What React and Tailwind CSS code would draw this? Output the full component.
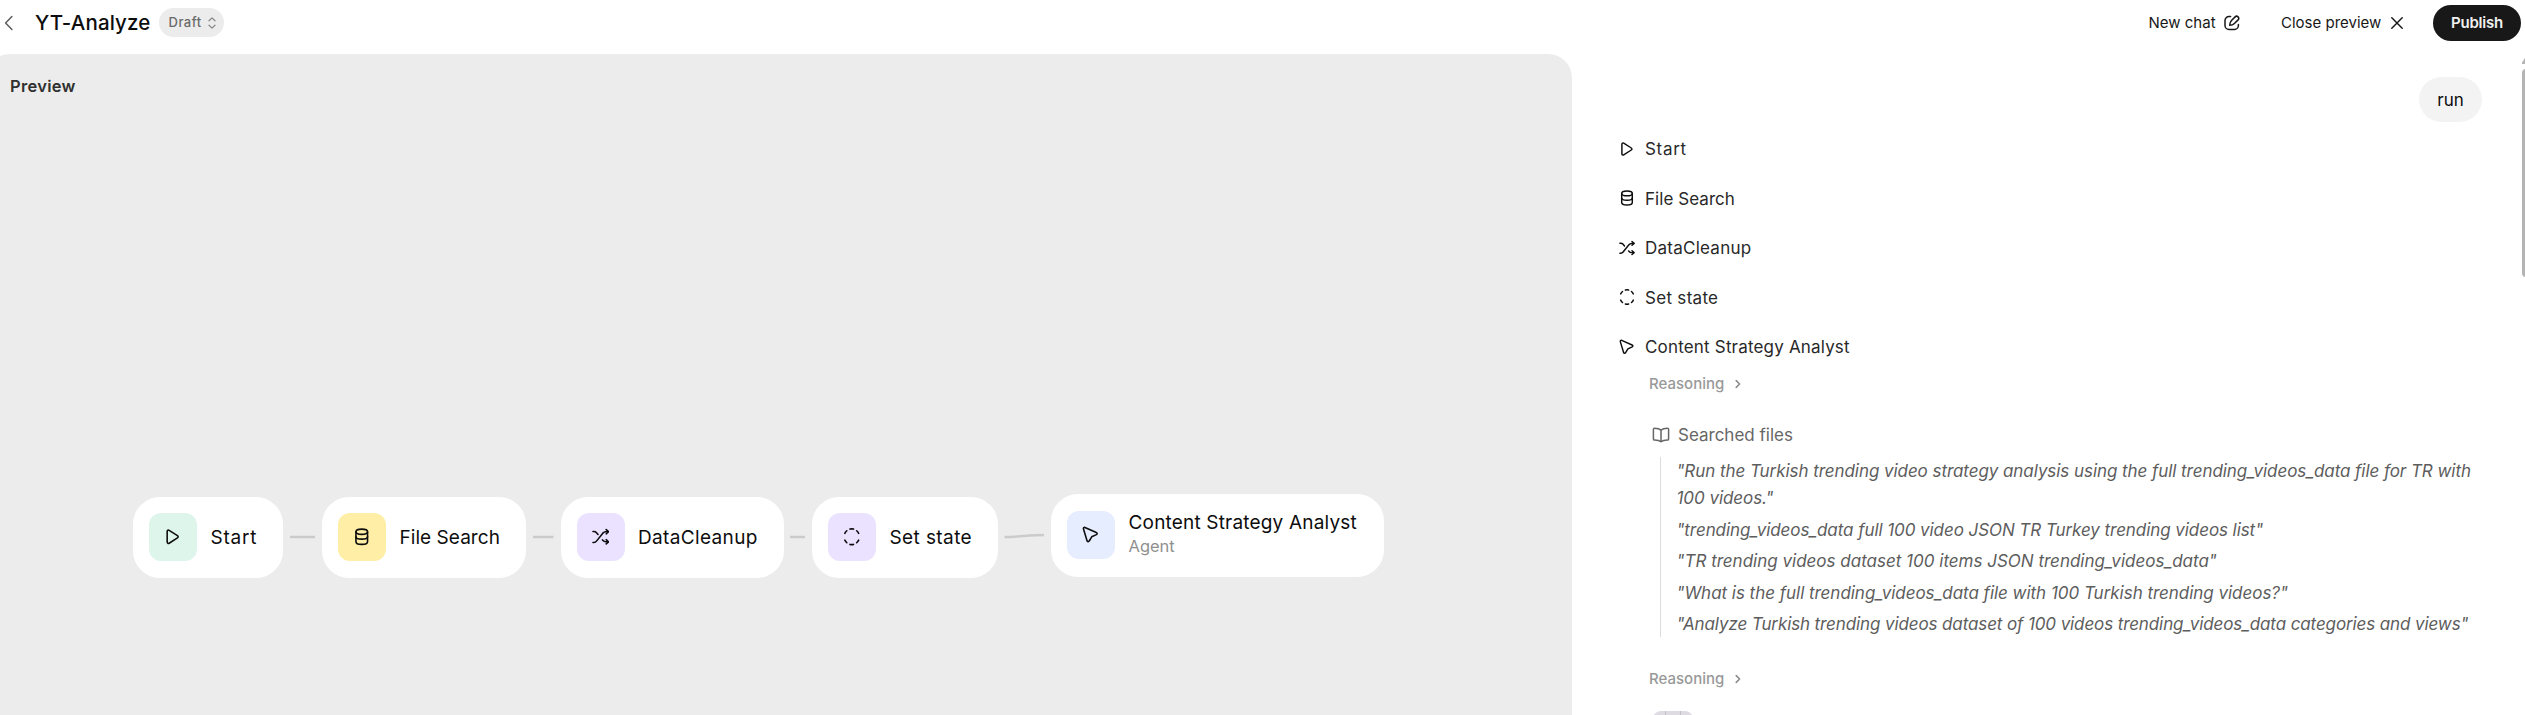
import React from "react";

const stroke = {
  fill: "none",
  stroke: "currentColor",
  strokeWidth: 1.45,
  strokeLinecap: "round",
  strokeLinejoin: "round",
};

const shapes = {
  play: (
    <path d="M2.9 3.1v9.8c0 1 1 1.5 1.8 1l7.6-4.9c.8-.5.8-1.5 0-2L4.7 2.1c-.8-.5-1.8 0-1.8 1z" />
  ),
  database: (
    <>
      <ellipse cx="8" cy="3.4" rx="5.3" ry="2.4" />
      <path d="M2.7 3.4v9.1c0 1.4 2.4 2.5 5.3 2.5s5.3-1.1 5.3-2.5V3.4" />
      <path d="M2.7 7.9c0 1.3 2.4 2.3 5.3 2.3s5.3-1 5.3-2.3" />
    </>
  ),
  shuffle: (
    <>
      <path d="M.9 13.2h.8c1 0 1.8-.4 2.4-1.2l5.8-7.3c.7-.8 1.5-1.3 2.6-1.3h2.2" />
      <path d="M.9 3.2h.8c1 0 1.8.4 2.4 1.1l1.4 1.6" />
      <path d="M9.6 10.9l.5.6c.6.7 1.4 1.1 2.4 1.1h2.2" />
      <path d="M13 1.5l2.1 1.9L13 5.3M13 10.7l2.1 1.9-2.1 1.9" />
    </>
  ),
  state: (
    <path d="M6.4 1A7.2 7.2 0 0 1 9.6 1M12.5 2.5A7.2 7.2 0 0 1 14.3 4.9M14.3 11.1A7.2 7.2 0 0 1 12.5 13.5M9.6 15A7.2 7.2 0 0 1 6.4 15M3.5 13.5A7.2 7.2 0 0 1 1.7 11.1M1.7 4.9A7.2 7.2 0 0 1 3.5 2.5" />
  ),
  agent: (
    <path d="M1.3 2.6l3.3 10.9c.3 1 1.5 1.1 2 .2L8.9 9.9l4.3-2c.9-.5.9-1.6-.1-1.9L2.7 1.3c-.8-.3-1.6.4-1.4 1.3z" />
  ),
};

function Icon({ name, className = "size-4" }) {
  return (
    <svg viewBox="0 0 16 16" className={`${className} shrink-0`} {...stroke}>
      {shapes[name]}
    </svg>
  );
}

const steps = [
  { icon: "play", label: "Start", tracking: "tracking-[0.7px]" },
  { icon: "database", label: "File Search", tracking: "tracking-[0.05px]" },
  { icon: "shuffle", label: "DataCleanup", tracking: "tracking-[0.25px]" },
  { icon: "state", label: "Set state", tracking: "tracking-[0.3px]" },
  { icon: "agent", label: "Content Strategy Analyst", tracking: "tracking-[0.18px]" },
];

const nodes = [
  { icon: "play", label: "Start", box: "left-[133px] top-[496.5px] w-[150px] h-[81px]", tile: "bg-[#def5ec]", tracking: "tracking-[0.8px]" },
  { icon: "database", label: "File Search", box: "left-[322px] top-[496.5px] w-[204px] h-[81px]", tile: "bg-[#ffeea5]", tracking: "tracking-[0.05px]" },
  { icon: "shuffle", label: "DataCleanup", box: "left-[560.5px] top-[496.5px] w-[223.5px] h-[81px]", tile: "bg-[#ebe2ff]", tracking: "tracking-[0.35px]" },
  { icon: "state", label: "Set state", box: "left-[812px] top-[496.5px] w-[186px] h-[81px]", tile: "bg-[#ebe2ff]", tracking: "tracking-[0.4px]" },
  { icon: "agent", label: "Content Strategy Analyst", sub: "Agent", box: "left-[1051px] top-[494px] w-[332.5px] h-[82.5px]", tile: "bg-[#e6edff]", tracking: "tracking-[0.18px]" },
];

const queries = [
  { text: '"Run the Turkish trending video strategy analysis using the full trending_videos_data file for TR with 100 videos."', tracking: "tracking-[-0.06px]" },
  { text: '"trending_videos_data full 100 video JSON TR Turkey trending videos list"', tracking: "tracking-[-0.07px]" },
  { text: '"TR trending videos dataset 100 items JSON trending_videos_data"', tracking: "tracking-[0px]" },
  { text: '"What is the full trending_videos_data file with 100 Turkish trending videos?"', tracking: "tracking-[-0.03px]" },
  { text: '"Analyze Turkish trending videos dataset of 100 videos trending_videos_data categories and views"', tracking: "tracking-[-0.11px]" },
];

function Header() {
  return (
    <header className="flex h-[45px] shrink-0 items-center pr-1 text-[#181818]">
      <svg viewBox="0 0 10 16" className="ml-1 h-4 w-2.5 text-[#5c5c5c]" {...stroke}>
        <path d="M7.9 1.4L1.6 8l6.3 6.6" />
      </svg>
      <h1 className="ml-[21px] w-[124px] pt-px text-[20.5px] font-medium tracking-[0.12px] whitespace-nowrap text-[#0d0d0d]">
        YT-Analyze
      </h1>
      <button className="flex h-[29px] w-[65px] items-center rounded-full bg-[#ececec] pl-[9.5px] text-[13px] font-medium tracking-[0.5px] text-[#6a6a6a]">
        <span className="w-[39px] text-left">Draft</span>
        <svg viewBox="0 0 8 12" className="h-3 w-2 text-[#868686]" {...stroke} strokeWidth="1.2">
          <path d="M1 3.8L4 .9l3 2.9M1 8.2l3 2.9 3-2.9" />
        </svg>
      </button>
      <div className="ml-auto flex items-center text-[15px]">
        <button className="flex items-center">
          <span className="w-[75.5px] pt-px text-left whitespace-nowrap">New chat</span>
          <svg viewBox="0 0 16 16" className="size-4" {...stroke} strokeWidth="1.5">
            <path d="M6.6 1.5H5A4 4 0 0 0 1 5.5v5A4 4 0 0 0 5 14.5h5.4a4 4 0 0 0 4-4V9.4" />
            <path d="M5.7 10.3c0-2.1.6-3.6 1.8-4.8l3.6-3.6a2.05 2.05 0 0 1 2.95 2.95L10.4 8.5c-1.2 1.2-2.6 1.8-4.7 1.8z" />
          </svg>
        </button>
        <button className="ml-[41px] flex items-center">
          <span className="w-[110px] pt-px text-left whitespace-nowrap">Close preview</span>
          <svg viewBox="0 0 12 12" className="size-3" {...stroke}>
            <path d="M.8.8l10.4 10.4M11.2.8L.8 11.2" />
          </svg>
        </button>
        <button className="ml-[30px] h-9 w-[88px] rounded-full bg-[#181818] pt-px font-semibold tracking-[-0.2px] text-[#f0f0f0]">
          Publish
        </button>
      </div>
    </header>
  );
}

function Node({ node }) {
  return (
    <div className={`absolute flex items-start rounded-[27px] bg-white pt-[16.5px] pl-4 ${node.box}`}>
      <div className={`flex size-12 shrink-0 items-center justify-center rounded-xl text-[#0d0d0d] ${node.tile}`}>
        <Icon name={node.icon} className="size-[17.5px]" />
      </div>
      <div className={node.sub ? "ml-[13.5px] pt-[0.5px]" : "ml-[13.5px] flex h-12 items-center pt-[2px]"}>
        <div className={`text-[19px] leading-6 whitespace-nowrap text-[#0d0d0d] ${node.tracking}`}>{node.label}</div>
        {node.sub && (
          <div className="text-[16.5px] leading-[22px] text-[#8f8f8f]">{node.sub}</div>
        )}
      </div>
    </div>
  );
}

function Canvas() {
  return (
    <section className="-ml-[14px] flex w-[1586px] shrink-0 flex-col rounded-t-[24px] bg-[#ececec] pt-[20px] pl-[24px]">
      <h2 className="text-[16.5px] leading-6 font-semibold tracking-[0.3px] text-[#303030]">Preview</h2>
      <svg className="pointer-events-none absolute top-0 left-0 h-[715px] w-[1572px]" fill="none" stroke="#cbcbcb" strokeWidth="2.4">
        <path d="M290 537h25M533 537h20.5M790 537h15M1004.5 537C1020 537 1028 535 1044 535" />
      </svg>
      {nodes.map((n) => (
        <Node key={n.label} node={n} />
      ))}
    </section>
  );
}

function Reasoning({ className = "" }) {
  return (
    <div className={`ml-[30px] flex h-6 shrink-0 items-center text-[15px] font-medium text-[#999] ${className}`}>
      <span className="w-[84.5px] pt-px">Reasoning</span>
      <svg viewBox="0 0 8 10" className="h-2.5 w-2 text-[#8a8a8a]" {...stroke} strokeWidth="1.5">
        <path d="M2.2 1.6L5.6 5 2.2 8.4" />
      </svg>
    </div>
  );
}

function Chat() {
  return (
    <section className="flex min-w-0 flex-1 flex-col overflow-hidden pr-[43px] pl-[47px] text-[17px]">
      <div className="mt-[23px] flex h-[45px] w-[63px] shrink-0 items-center justify-center self-end rounded-full bg-[#f3f3f3] pt-[2px] text-[#0d0d0d]">
        run
      </div>
      <div className="mt-[2px] shrink-0">
        {steps.map((s) => (
          <div key={s.label} className="flex h-[49.5px] items-center text-[#0d0d0d]">
            <Icon name={s.icon} />
            <span className={`ml-[10px] pt-[2px] text-[#282828] ${s.tracking}`}>{s.label}</span>
          </div>
        ))}
      </div>
      <Reasoning />
      <div className="mt-[27.3px] ml-[33px] flex h-6 shrink-0 items-center text-[#666]">
        <svg viewBox="0 0 18 16" className="h-4 w-[18px]" {...stroke} strokeWidth="1.5">
          <path d="M9 3.1C7.5 1.7 5.2 1.2 2.6 1.2c-.8 0-1.2.4-1.2 1.1v9.7c0 .7.4 1.1 1.2 1.1 2.6 0 4.9.4 6.4 1.7 1.5-1.3 3.8-1.7 6.4-1.7.8 0 1.2-.4 1.2-1.1V2.3c0-.7-.4-1.1-1.2-1.1-2.6 0-4.9.5-6.4 1.9zM9 3.1v11.7" />
        </svg>
        <span className="ml-[8px] pt-px">Searched files</span>
      </div>
      <div className="mt-[10.2px] -mr-1 ml-[41px] h-[180px] shrink-0 border-l border-[#dcdcdc] pl-[15.5px] text-[#5d5d5d] italic">
        <div className="flex flex-col gap-[4.5px] pt-[1.2px]">
          {queries.map((q) => (
            <p key={q.text} className={`leading-[27px] ${q.tracking}`}>{q.text}</p>
          ))}
        </div>
      </div>
      <Reasoning className="mt-[29.6px]" />
      <div className="mt-5 ml-[33.5px] flex h-6 w-10 shrink-0 overflow-hidden rounded-t-[8px] bg-[#dedbe3]">
        <span className="ml-3 h-6 w-px bg-[#c4c0ca]" />
        <span className="ml-3.5 h-6 w-px bg-[#c4c0ca]" />
      </div>
    </section>
  );
}

function Scrollbar() {
  return (
    <div className="absolute top-[58px] right-0 w-[3px] overflow-hidden text-[#b4b4b4]">
      <svg viewBox="0 0 3 6" className="block h-1.5 w-[3px]" fill="currentColor">
        <path d="M3 0v6H0V4.5z" />
      </svg>
      <div className="mt-[5px] h-[208px] w-2 rounded-full bg-[#b4b4b4]" />
    </div>
  );
}

export default function App() {
  return (
    <div className="relative flex h-[715px] w-[2525px] flex-col overflow-hidden bg-white font-['Inter',sans-serif]">
      <Header />
      <main className="mt-[9px] flex h-[661px]">
        <Canvas />
        <Chat />
      </main>
      <Scrollbar />
    </div>
  );
}
